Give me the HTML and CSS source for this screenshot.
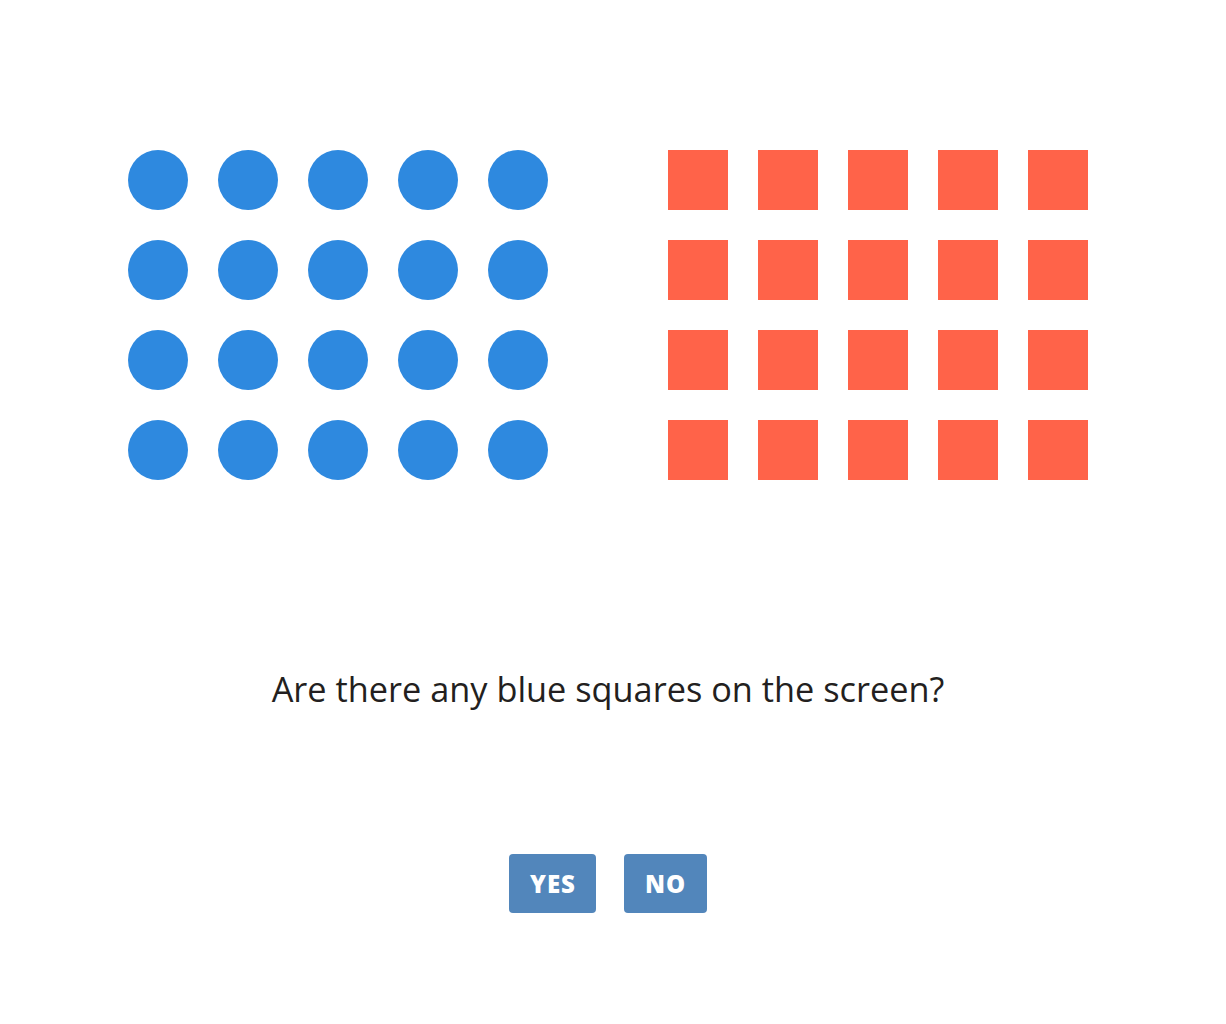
FILE: index.html
```html
<!DOCTYPE html>
<html>
<head>
<meta charset="utf-8">
<link rel="stylesheet" href="styles.css">
</head>
<body>
<main class="page">
  <section class="stage">
    <div class="grid">
      <span class="dot"></span><span class="dot"></span><span class="dot"></span><span class="dot"></span><span class="dot"></span>
      <span class="dot"></span><span class="dot"></span><span class="dot"></span><span class="dot"></span><span class="dot"></span>
      <span class="dot"></span><span class="dot"></span><span class="dot"></span><span class="dot"></span><span class="dot"></span>
      <span class="dot"></span><span class="dot"></span><span class="dot"></span><span class="dot"></span><span class="dot"></span>
    </div>
    <div class="grid">
      <span class="sq"></span><span class="sq"></span><span class="sq"></span><span class="sq"></span><span class="sq"></span>
      <span class="sq"></span><span class="sq"></span><span class="sq"></span><span class="sq"></span><span class="sq"></span>
      <span class="sq"></span><span class="sq"></span><span class="sq"></span><span class="sq"></span><span class="sq"></span>
      <span class="sq"></span><span class="sq"></span><span class="sq"></span><span class="sq"></span><span class="sq"></span>
    </div>
  </section>
  <p class="question">Are there any blue squares on the screen?</p>
  <div class="actions">
    <button class="btn">YES</button>
    <button class="btn">NO</button>
  </div>
</main>
</body>
</html>
```
FILE: styles.css
```css
html, body {
  margin: 0;
  padding: 0;
  background: #ffffff;
}
.page {
  width: 1216px;
  font-family: "Open Sans", "Liberation Sans", sans-serif;
}
.stage {
  display: flex;
  justify-content: center;
  gap: 120px;
  padding-top: 150px;
}
.grid {
  display: grid;
  grid-template-columns: repeat(5, 60px);
  grid-auto-rows: 60px;
  gap: 30px;
}
.dot {
  display: block;
  border-radius: 50%;
  background: #2e89df;
}
.sq {
  display: block;
  background: #ff6349;
}
.question {
  margin: 187px 0 0;
  text-align: center;
  font-size: 34.3px;
  line-height: 44px;
  color: #231f20;
}
.actions {
  display: flex;
  justify-content: center;
  gap: 28px;
  margin-top: 143px;
}
.btn {
  height: 59px;
  padding: 0 20.5px;
  border: none;
  border-radius: 4px;
  background: #5286bb;
  color: #ffffff;
  font-family: "Open Sans", "Liberation Sans", sans-serif;
  font-weight: 800;
  font-size: 24px;
  letter-spacing: 1px;
}
```
